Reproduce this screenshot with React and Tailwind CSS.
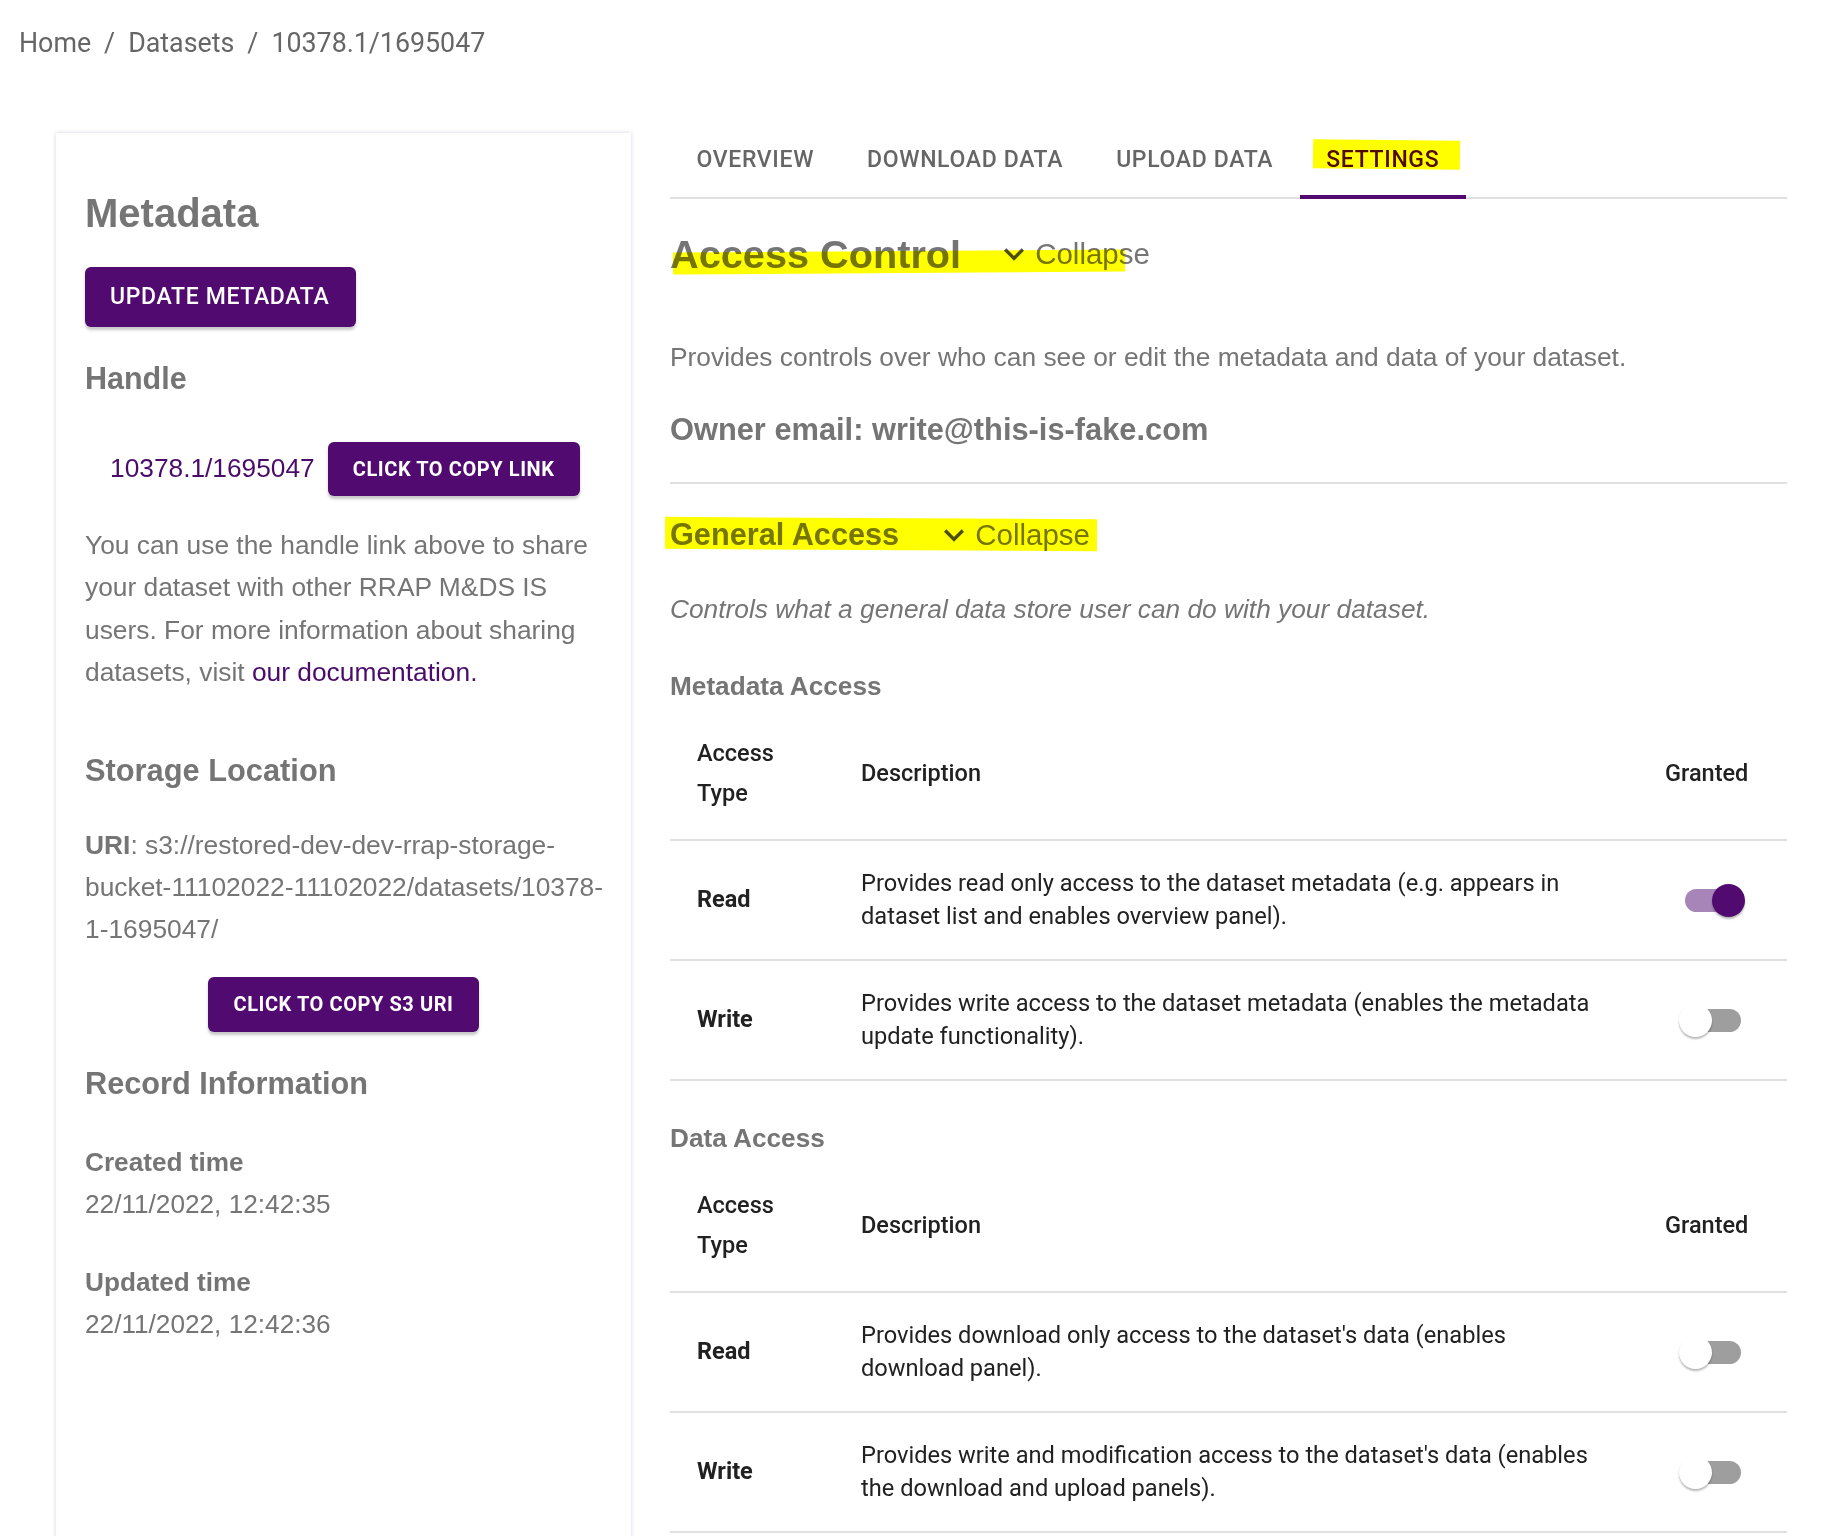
import React from 'react';

const arial = "font-['Liberation_Sans',Arial,sans-serif]";
const roboto = "font-['Roboto',Arial,sans-serif]";

// hand-drawn highlighter marks over the text
function Highlight({ className }) {
  return <span className={`pointer-events-none absolute bg-[#ffff00] mix-blend-multiply ${className}`} />;
}

function ExpandMore({ className }) {
  return (
    <svg viewBox="0 0 24 24" className={className} fill="currentColor">
      <path d="M16.59 8.59 12 13.17 7.41 8.59 6 10l6 6 6-6z" />
    </svg>
  );
}

function Switch({ on }) {
  return (
    <div className="relative h-[34px] w-[67px]">
      <span className={`absolute left-[6px] top-[5.5px] h-[23px] w-[56px] rounded-full ${on ? 'bg-[#a785b9]' : 'bg-[#9e9e9e]'}`} />
      <span
        className={`absolute top-[0.5px] h-[33px] w-[33px] rounded-full shadow-[0_2px_2px_rgba(0,0,0,0.28)] ${
          on ? 'left-[33px] bg-[#500a70]' : 'left-0 bg-white'
        }`}
      />
    </div>
  );
}

function AccessTable({ rows }) {
  return (
    <div className={`${roboto} text-[#212121]`}>
      <div className="grid h-[134px] grid-cols-[165px_804px_1fr] items-center border-b-2 border-[#e0e0e0] text-[23.5px] font-medium leading-[40px]">
        <div className="pl-[27px] pr-[26px]">Access Type</div>
        <div className="pl-[26px]">Description</div>
        <div className="pl-[26px]">Granted</div>
      </div>
      {rows.map((r) => (
        <div
          key={r.type}
          className="grid h-[120px] grid-cols-[165px_804px_1fr] items-center border-b-2 border-[#e0e0e0]"
        >
          <div className="pl-[27px] text-[23.5px] font-bold">{r.type}</div>
          <div className="pl-[26px] pr-[42px] text-[23.64px] leading-[33px]">{r.desc}</div>
          <div className="pl-[40px]">
            <Switch on={r.on} />
          </div>
        </div>
      ))}
    </div>
  );
}

const metadataRows = [
  {
    type: 'Read',
    desc: 'Provides read only access to the dataset metadata (e.g. appears in dataset list and enables overview panel).',
    on: true,
  },
  {
    type: 'Write',
    desc: 'Provides write access to the dataset metadata (enables the metadata update functionality).',
    on: false,
  },
];

const dataRows = [
  {
    type: 'Read',
    desc: "Provides download only access to the dataset's data (enables download panel).",
    on: false,
  },
  {
    type: 'Write',
    desc: "Provides write and modification access to the dataset's data (enables the download and upload panels).",
    on: false,
  },
];

const tabs = ['Overview', 'Download Data', 'Upload Data', 'Settings'];

function PurpleButton({ children, className }) {
  return (
    <button
      className={`rounded-[6px] bg-[#500a70] text-white uppercase tracking-[0.02857em] shadow-[0_3px_3px_rgba(0,0,0,0.22)] ${roboto} ${className}`}
    >
      {children}
    </button>
  );
}

function MetadataCard() {
  return (
    <aside
      className={`mt-[12px] min-h-[1500px] w-[575px] shrink-0 bg-white pl-[29px] pr-[21px] pt-[56px] shadow-[0_0_4px_rgba(70,60,150,0.22)] ${arial} text-[#757575]`}
    >
      <h1 className="h-[48px] text-[40px] font-bold leading-[48px]">Metadata</h1>
      <PurpleButton className="mt-[30px] h-[60px] pl-[25px] pr-[27px] text-[23px] font-medium">
        Update Metadata
      </PurpleButton>

      <h2 className="mt-[33px] h-[36px] text-[30.5px] font-bold leading-[36px]">Handle</h2>
      <div className="mt-[46px] flex h-[54px] items-center">
        <a className="ml-[25px] text-[26.3px] text-[#4a0b6b]">10378.1/1695047</a>
        <PurpleButton className="ml-[13px] h-[54px] px-[25px] text-[20px] font-bold">Click to copy link</PurpleButton>
      </div>
      <p className="mt-[28px] text-[26.35px] leading-[42.4px]">
        You can use the handle link above to share your dataset with other RRAP M&amp;DS IS users. For more
        information about sharing datasets, visit <a className="text-[#4a0b6b]">our documentation.</a>
      </p>

      <h2 className="mt-[59px] h-[36px] text-[30.8px] font-bold leading-[36px]">Storage Location</h2>
      <p className="mt-[35px] text-[26.35px] leading-[42.4px]">
        <span className="font-bold">URI</span>: s3://restored-dev-dev-rrap-storage-bucket-11102022-11102022/datasets/10378-1-1695047/
      </p>
      <div className="mt-[26px] flex justify-center pr-[8px]">
        <PurpleButton className="h-[55px] px-[25px] text-[20px] font-bold">Click to copy S3 URI</PurpleButton>
      </div>

      <h2 className="mt-[34.5px] h-[36px] text-[30.7px] font-bold leading-[36px]">Record Information</h2>
      <div className="mt-[39px] text-[26.2px] leading-[42px]">
        <div className="font-bold">Created time</div>
        <div>22/11/2022, 12:42:35</div>
      </div>
      <div className="mt-[35.5px] text-[26.2px] leading-[42px]">
        <div className="font-bold">Updated time</div>
        <div>22/11/2022, 12:42:36</div>
      </div>
    </aside>
  );
}

function CollapseToggle({ className }) {
  return (
    <button className={`flex items-center ${className}`}>
      <ExpandMore className="h-[40px] w-[40px] text-[#4d4d4d]" />
      <span className="ml-[1px] text-[29.5px] leading-[36px]">Collapse</span>
    </button>
  );
}

function SettingsPanel() {
  return (
    <section className="w-[1117px] shrink-0">
      <div className="flex h-[78px] border-b-2 border-[#e0e0e0]">
        {tabs.map((t) => (
          <div
            key={t}
            className={`relative flex h-full items-center px-[26.5px] pt-[2px] ${roboto} text-[23px] font-medium uppercase tracking-[0.02857em] ${
              t === 'Settings' ? 'text-[#500a70]' : 'text-[#666666]'
            }`}
          >
            {t}
            {t === 'Settings' && (
              <>
                <span className="absolute bottom-[-2px] left-0 right-0 h-[4px] bg-[#500a70]" />
                <Highlight className="left-[13px] top-[19px] h-[29px] w-[147px] rotate-[0.6deg]" />
              </>
            )}
          </div>
        ))}
      </div>

      <div className={`${arial} text-[#757575]`}>
        <div className="relative mt-[31px] flex h-[48px] items-center">
          <h2 className="text-[39.7px] font-bold leading-[48px]">Access Control</h2>
          <CollapseToggle className="ml-[33px]" />
          <Highlight className="left-[3px] top-[21px] h-[22px] w-[452px] -rotate-[0.4deg]" />
        </div>

        <p className="mt-[59px] text-[26.35px] leading-[40px]">
          Provides controls over who can see or edit the metadata and data of your dataset.
        </p>
        <p className="mt-[33px] text-[30.8px] font-bold leading-[40px]">Owner email: write@this-is-fake.com</p>

        <div className="mt-[32px] h-[2px] bg-[#e0e0e0]" />

        <div className="relative mt-[31px] flex h-[40px] items-center">
          <h3 className="text-[30.7px] font-bold leading-[40px]">General Access</h3>
          <CollapseToggle className="ml-[35px]" />
          <Highlight className="-left-[5px] top-[3px] h-[32px] w-[432px] rotate-[0.3deg]" />
        </div>

        <p className="mt-[34px] text-[26.3px] italic leading-[40px]">
          Controls what a general data store user can do with your dataset.
        </p>

        <h4 className="mt-[39px] h-[36px] text-[26.2px] font-bold leading-[36px]">Metadata Access</h4>
        <div className="mt-[3px]">
          <AccessTable rows={metadataRows} />
        </div>

        <h4 className="mt-[39px] h-[36px] text-[26.2px] font-bold leading-[36px]">Data Access</h4>
        <div className="mt-[3px]">
          <AccessTable rows={dataRows} />
        </div>
      </div>
    </section>
  );
}

export default function App() {
  return (
    <div className="min-h-screen w-full overflow-hidden bg-white">
      <nav className={`${roboto} mt-[23px] flex h-[40px] items-center pl-[19px] text-[26.8px] text-[#666666]`}>
        <span>Home</span>
        <span className="mx-[13px]">/</span>
        <span>Datasets</span>
        <span className="mx-[13px]">/</span>
        <span>10378.1/1695047</span>
      </nav>

      <main className="mt-[58px] flex gap-[39px] pl-[56px]">
        <MetadataCard />
        <SettingsPanel />
      </main>
    </div>
  );
}
